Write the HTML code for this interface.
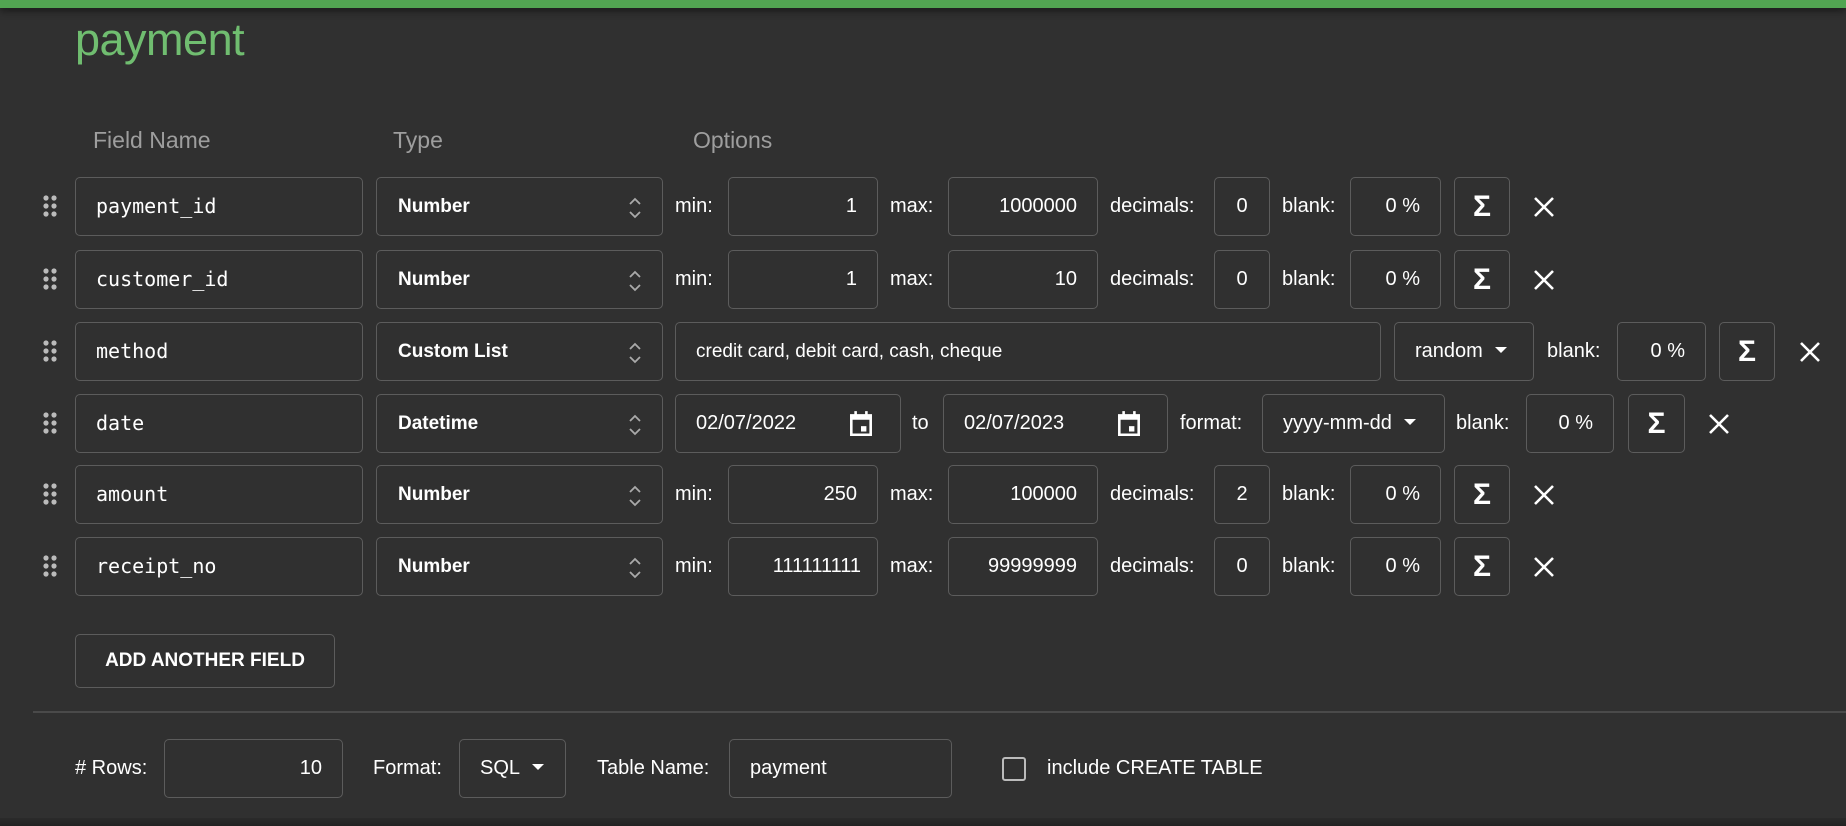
<!DOCTYPE html>
<html><head><meta charset="utf-8"><style>
*{box-sizing:border-box;margin:0;padding:0}
body{width:1846px;height:826px;background:#303030;overflow:hidden;position:relative;font-family:"Liberation Sans",sans-serif;color:#fff}
.a{position:absolute}
.bar{left:0;top:0;width:1846px;height:8px;background:#52a552;box-shadow:0 3px 8px rgba(0,0,0,.5)}
.title{left:75px;top:14px;font-size:45px;color:#70bd70;font-weight:normal;letter-spacing:-0.5px}
.h{top:127px;font-size:23px;color:#9e9e9e}
.b{position:absolute;border:1px solid #5c5c5c;border-radius:5px;height:59px;font-size:20px;line-height:57px;color:#fff}
.l{position:absolute;font-size:20px;line-height:59px;color:#fff}
.mono{font-family:"DejaVu Sans Mono","Liberation Mono",monospace;font-size:20px;padding-left:20px}
.ty{font-weight:bold;font-size:19px;padding-left:21px}
.r{text-align:right;padding-right:20px}
.c{text-align:center}
.sig{font-weight:bold;font-size:30px;text-align:center}
.dots{position:absolute;width:16px;height:24px}
.arr{position:absolute;right:20px;top:18px}
.car{display:inline-block;width:0;height:0;border-left:6px solid transparent;border-right:6px solid transparent;border-top:6px solid #fff;vertical-align:middle;margin-left:12px;margin-top:-3px}
</style></head><body>
<div class="a bar"></div>
<div class="a title">payment</div>
<div class="a h" style="left:93px">Field Name</div>
<div class="a h" style="left:393px">Type</div>
<div class="a h" style="left:693px">Options</div>

<svg class="dots" style="left:42px;top:194px" viewBox="0 0 16 24"><g fill="#bbb"><circle cx="4" cy="4" r="2.6"/><circle cx="12" cy="4" r="2.6"/><circle cx="4" cy="12" r="2.6"/><circle cx="12" cy="12" r="2.6"/><circle cx="4" cy="20" r="2.6"/><circle cx="12" cy="20" r="2.6"/></g></svg>
<div class="b mono" style="left:75px;top:177px;width:288px">payment_id</div>
<div class="b ty" style="left:376px;top:177px;width:287px">Number<svg class="arr" width="14" height="24" viewBox="0 0 14 24"><path d="M2 8l5-5 5 5M2 16l5 5 5-5" stroke="#aaa" stroke-width="1.8" fill="none"/></svg></div>
<div class="l" style="left:675px;top:177px">min:</div>
<div class="b r" style="left:728px;top:177px;width:150px">1</div>
<div class="l" style="left:890px;top:177px">max:</div>
<div class="b r" style="left:948px;top:177px;width:150px">1000000</div>
<div class="l" style="left:1110px;top:177px">decimals:</div>
<div class="b c" style="left:1214px;top:177px;width:56px">0</div>
<div class="l" style="left:1282px;top:177px">blank:</div>
<div class="b r" style="left:1350px;top:177px;width:91px">0 %</div>
<div class="b sig" style="left:1454px;top:177px;width:56px">Σ</div>
<svg class="a" style="left:1533px;top:196px" width="22" height="22"><path d="M2 2L20 20M20 2L2 20" stroke="#fff" stroke-width="2.6"/></svg>

<svg class="dots" style="left:42px;top:267px" viewBox="0 0 16 24"><g fill="#bbb"><circle cx="4" cy="4" r="2.6"/><circle cx="12" cy="4" r="2.6"/><circle cx="4" cy="12" r="2.6"/><circle cx="12" cy="12" r="2.6"/><circle cx="4" cy="20" r="2.6"/><circle cx="12" cy="20" r="2.6"/></g></svg>
<div class="b mono" style="left:75px;top:250px;width:288px">customer_id</div>
<div class="b ty" style="left:376px;top:250px;width:287px">Number<svg class="arr" width="14" height="24" viewBox="0 0 14 24"><path d="M2 8l5-5 5 5M2 16l5 5 5-5" stroke="#aaa" stroke-width="1.8" fill="none"/></svg></div>
<div class="l" style="left:675px;top:250px">min:</div>
<div class="b r" style="left:728px;top:250px;width:150px">1</div>
<div class="l" style="left:890px;top:250px">max:</div>
<div class="b r" style="left:948px;top:250px;width:150px">10</div>
<div class="l" style="left:1110px;top:250px">decimals:</div>
<div class="b c" style="left:1214px;top:250px;width:56px">0</div>
<div class="l" style="left:1282px;top:250px">blank:</div>
<div class="b r" style="left:1350px;top:250px;width:91px">0 %</div>
<div class="b sig" style="left:1454px;top:250px;width:56px">Σ</div>
<svg class="a" style="left:1533px;top:269px" width="22" height="22"><path d="M2 2L20 20M20 2L2 20" stroke="#fff" stroke-width="2.6"/></svg>

<svg class="dots" style="left:42px;top:339px" viewBox="0 0 16 24"><g fill="#bbb"><circle cx="4" cy="4" r="2.6"/><circle cx="12" cy="4" r="2.6"/><circle cx="4" cy="12" r="2.6"/><circle cx="12" cy="12" r="2.6"/><circle cx="4" cy="20" r="2.6"/><circle cx="12" cy="20" r="2.6"/></g></svg>
<div class="b mono" style="left:75px;top:322px;width:288px">method</div>
<div class="b ty" style="left:376px;top:322px;width:287px">Custom List<svg class="arr" width="14" height="24" viewBox="0 0 14 24"><path d="M2 8l5-5 5 5M2 16l5 5 5-5" stroke="#aaa" stroke-width="1.8" fill="none"/></svg></div>
<div class="b" style="left:675px;top:322px;width:706px;padding-left:20px;font-size:19px">credit card, debit card, cash, cheque</div>
<div class="b" style="left:1394px;top:322px;width:140px;padding-left:20px">random<span class="car"></span></div>
<div class="l" style="left:1547px;top:322px">blank:</div>
<div class="b r" style="left:1617px;top:322px;width:89px">0 %</div>
<div class="b sig" style="left:1719px;top:322px;width:56px">Σ</div>
<svg class="a" style="left:1799px;top:341px" width="22" height="22"><path d="M2 2L20 20M20 2L2 20" stroke="#fff" stroke-width="2.6"/></svg>

<svg class="dots" style="left:42px;top:411px" viewBox="0 0 16 24"><g fill="#bbb"><circle cx="4" cy="4" r="2.6"/><circle cx="12" cy="4" r="2.6"/><circle cx="4" cy="12" r="2.6"/><circle cx="12" cy="12" r="2.6"/><circle cx="4" cy="20" r="2.6"/><circle cx="12" cy="20" r="2.6"/></g></svg>
<div class="b mono" style="left:75px;top:394px;width:288px">date</div>
<div class="b ty" style="left:376px;top:394px;width:287px">Datetime<svg class="arr" width="14" height="24" viewBox="0 0 14 24"><path d="M2 8l5-5 5 5M2 16l5 5 5-5" stroke="#aaa" stroke-width="1.8" fill="none"/></svg></div>
<div class="b" style="left:675px;top:394px;width:226px;padding-left:20px">02/07/2022<svg class="a" style="left:172px;top:15px" width="26" height="28" viewBox="0 0 24 26"><path d="M3 5h18v18H3z" fill="none" stroke="#fff" stroke-width="2.4"/><path d="M3 5h18v4H3z" fill="#fff"/><path d="M7 1v5M17 1v5" stroke="#fff" stroke-width="2.4"/><rect x="12" y="15" width="5" height="5" fill="#fff"/></svg></div>
<div class="l" style="left:912px;top:394px">to</div>
<div class="b" style="left:943px;top:394px;width:225px;padding-left:20px">02/07/2023<svg class="a" style="left:172px;top:15px" width="26" height="28" viewBox="0 0 24 26"><path d="M3 5h18v18H3z" fill="none" stroke="#fff" stroke-width="2.4"/><path d="M3 5h18v4H3z" fill="#fff"/><path d="M7 1v5M17 1v5" stroke="#fff" stroke-width="2.4"/><rect x="12" y="15" width="5" height="5" fill="#fff"/></svg></div>
<div class="l" style="left:1180px;top:394px">format:</div>
<div class="b" style="left:1262px;top:394px;width:183px;padding-left:20px">yyyy-mm-dd<span class="car"></span></div>
<div class="l" style="left:1456px;top:394px">blank:</div>
<div class="b r" style="left:1526px;top:394px;width:88px">0 %</div>
<div class="b sig" style="left:1628px;top:394px;width:57px">Σ</div>
<svg class="a" style="left:1708px;top:413px" width="22" height="22"><path d="M2 2L20 20M20 2L2 20" stroke="#fff" stroke-width="2.6"/></svg>

<svg class="dots" style="left:42px;top:482px" viewBox="0 0 16 24"><g fill="#bbb"><circle cx="4" cy="4" r="2.6"/><circle cx="12" cy="4" r="2.6"/><circle cx="4" cy="12" r="2.6"/><circle cx="12" cy="12" r="2.6"/><circle cx="4" cy="20" r="2.6"/><circle cx="12" cy="20" r="2.6"/></g></svg>
<div class="b mono" style="left:75px;top:465px;width:288px">amount</div>
<div class="b ty" style="left:376px;top:465px;width:287px">Number<svg class="arr" width="14" height="24" viewBox="0 0 14 24"><path d="M2 8l5-5 5 5M2 16l5 5 5-5" stroke="#aaa" stroke-width="1.8" fill="none"/></svg></div>
<div class="l" style="left:675px;top:465px">min:</div>
<div class="b r" style="left:728px;top:465px;width:150px">250</div>
<div class="l" style="left:890px;top:465px">max:</div>
<div class="b r" style="left:948px;top:465px;width:150px">100000</div>
<div class="l" style="left:1110px;top:465px">decimals:</div>
<div class="b c" style="left:1214px;top:465px;width:56px">2</div>
<div class="l" style="left:1282px;top:465px">blank:</div>
<div class="b r" style="left:1350px;top:465px;width:91px">0 %</div>
<div class="b sig" style="left:1454px;top:465px;width:56px">Σ</div>
<svg class="a" style="left:1533px;top:484px" width="22" height="22"><path d="M2 2L20 20M20 2L2 20" stroke="#fff" stroke-width="2.6"/></svg>

<svg class="dots" style="left:42px;top:554px" viewBox="0 0 16 24"><g fill="#bbb"><circle cx="4" cy="4" r="2.6"/><circle cx="12" cy="4" r="2.6"/><circle cx="4" cy="12" r="2.6"/><circle cx="12" cy="12" r="2.6"/><circle cx="4" cy="20" r="2.6"/><circle cx="12" cy="20" r="2.6"/></g></svg>
<div class="b mono" style="left:75px;top:537px;width:288px">receipt_no</div>
<div class="b ty" style="left:376px;top:537px;width:287px">Number<svg class="arr" width="14" height="24" viewBox="0 0 14 24"><path d="M2 8l5-5 5 5M2 16l5 5 5-5" stroke="#aaa" stroke-width="1.8" fill="none"/></svg></div>
<div class="l" style="left:675px;top:537px">min:</div>
<div class="b r" style="left:728px;top:537px;width:150px;padding-right:16px">111111111</div>
<div class="l" style="left:890px;top:537px">max:</div>
<div class="b r" style="left:948px;top:537px;width:150px">99999999</div>
<div class="l" style="left:1110px;top:537px">decimals:</div>
<div class="b c" style="left:1214px;top:537px;width:56px">0</div>
<div class="l" style="left:1282px;top:537px">blank:</div>
<div class="b r" style="left:1350px;top:537px;width:91px">0 %</div>
<div class="b sig" style="left:1454px;top:537px;width:56px">Σ</div>
<svg class="a" style="left:1533px;top:556px" width="22" height="22"><path d="M2 2L20 20M20 2L2 20" stroke="#fff" stroke-width="2.6"/></svg>

<div class="b c" style="left:75px;top:634px;width:260px;height:54px;line-height:52px;font-weight:bold;font-size:19px">ADD ANOTHER FIELD</div>
<div class="a" style="left:33px;top:711px;width:1813px;height:2px;background:#4a4a4a"></div>

<div class="l" style="left:75px;top:739px">#&nbsp;Rows:</div>
<div class="b r" style="left:164px;top:739px;width:179px">10</div>
<div class="l" style="left:373px;top:739px">Format:</div>
<div class="b" style="left:459px;top:739px;width:107px;padding-left:20px">SQL<span class="car"></span></div>
<div class="l" style="left:597px;top:739px">Table Name:</div>
<div class="b" style="left:729px;top:739px;width:223px;padding-left:20px">payment</div>
<div class="a" style="left:1002px;top:757px;width:24px;height:24px;border:2px solid #bbb;border-radius:3px"></div>
<div class="l" style="left:1047px;top:739px">include CREATE TABLE</div>
<div class="a" style="left:0;top:818px;width:1846px;height:8px;background:linear-gradient(#2b2b2b,#222)"></div>
</body></html>
